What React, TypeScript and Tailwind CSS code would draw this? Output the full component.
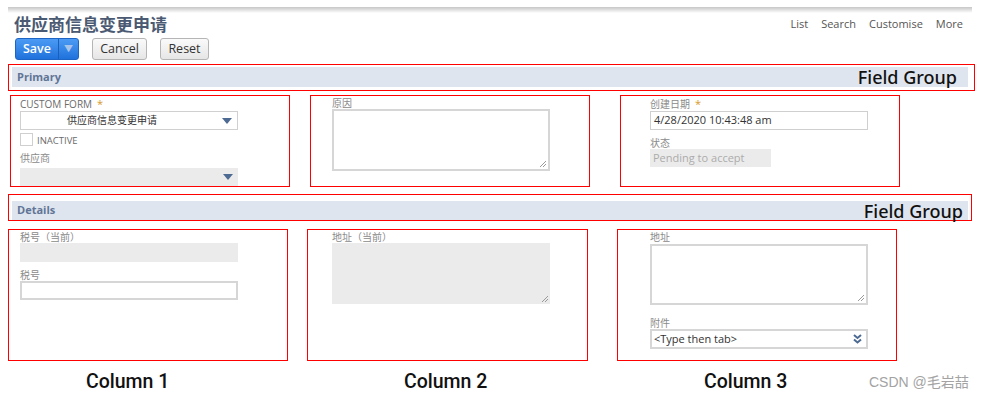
import React from "react"

const BASE = "font-['Open_Sans','Noto_Sans_CJK_SC',sans-serif]"
const LABEL = "text-[10px] leading-[12px] text-[#6b6b6b]"
const CJK_LABEL = "text-[10px] leading-[12px] text-[#8a8a8a]"

function DownTriangle() {
  return (
    <svg width="10" height="6" viewBox="0 0 10 6" className="shrink-0">
      <polygon points="0,0 10,0 5,6" fill="#4d6a92" />
    </svg>
  )
}

function DoubleChevron() {
  return (
    <svg width="9" height="10" viewBox="0 0 9 10" className="shrink-0">
      <path d="M1 1 L4.5 4 L8 1" stroke="#4d6a92" strokeWidth="2" fill="none" />
      <path d="M1 5.5 L4.5 8.5 L8 5.5" stroke="#4d6a92" strokeWidth="2" fill="none" />
    </svg>
  )
}

function ResizeGrip() {
  return (
    <svg width="8" height="8" viewBox="0 0 8 8" className="absolute right-[1px] bottom-[1px]">
      <path d="M7 1 L1 7 M7 4 L4 7" stroke="#9a9a9a" strokeWidth="1" />
    </svg>
  )
}

function Star() {
  return <span className="ml-[5px] text-[#d79a2b] text-[11px]">*</span>
}

function FieldGroup({ title, pt, barH, pr, textPr }: { title: string; pt: string; barH: string; pr: string; textPr: string }) {
  return (
    <div className={`ml-[8px] h-[27px] border border-[#f00] pl-[3px] ${pt} ${pr}`}>
      <div className={`flex items-center justify-between bg-[#dfe5ee] pl-[5px] ${barH}`}>
        <span className="text-[11px] font-bold text-[#5f7597]">{title}</span>
        <span className={`font-['Noto_Sans','Noto_Sans_CJK_SC',sans-serif] text-[18px] font-medium text-[#111] leading-none ${textPr}`}>
          Field Group
        </span>
      </div>
    </div>
  )
}

export default function App() {
  return (
    <div className={`${BASE} w-[984px] h-[400px] bg-white relative pt-[7px]`}>
      {/* top shadow */}
      <div className="ml-[8px] w-[964px] h-[6px] bg-linear-to-b from-[#c6c6c6] to-white" />

      {/* title row */}
      <div className="flex justify-between pl-[14px] pr-[21px]">
        <h1 className="text-[17px] leading-[21px] font-bold text-[#4b5a73] font-['Noto_Sans_CJK_SC',sans-serif]">
          供应商信息变更申请
        </h1>
        <nav className="flex gap-[13px] mt-[3px] text-[11px] leading-[16px] text-[#555]">
          <span>List</span>
          <span>Search</span>
          <span>Customise</span>
          <span>More</span>
        </nav>
      </div>

      {/* buttons */}
      <div className="flex items-center pl-[15px] mt-[4px] h-[22px]">
        <div className="flex h-[22px] w-[64px] rounded-[3px] overflow-hidden border border-[#1d64c4] bg-linear-to-b from-[#4b9bf4] to-[#1f72dc]">
          <span className="flex-1 flex items-center justify-center text-[12.5px] font-semibold text-white">Save</span>
          <span className="w-[20px] border-l border-[#1a5fb8] flex items-center justify-center text-[9px] text-[#a8c4ea]">▼</span>
        </div>
        <button className="ml-[13px] h-[22px] w-[55px] rounded-[3px] border border-[#b5b5b5] bg-linear-to-b from-[#fafafa] to-[#e6e6e6] text-[12.5px] text-[#333]">
          Cancel
        </button>
        <button className="ml-[13px] h-[22px] w-[49px] rounded-[3px] border border-[#b5b5b5] bg-linear-to-b from-[#fafafa] to-[#e6e6e6] text-[12.5px] text-[#333]">
          Reset
        </button>
      </div>

      {/* Primary group */}
      <div className="mt-[4px] w-[975px]">
        <FieldGroup title="Primary" pt="pt-[2px]" barH="h-[20px]" pr="pr-[6px]" textPr="pr-[11px]" />
      </div>

      {/* Primary columns */}
      <div className="flex mt-[4px]">
        <div className="ml-[10px] w-[280px] h-[92px] border border-[#f00] pl-[9px] pt-[2px] flex flex-col">
          <div className={`${LABEL} uppercase`}>
            Custom Form<Star />
          </div>
          <div className="mt-[1px] w-[218px] h-[19px] border border-[#d0d0d0] flex items-center pl-[46px] pr-[5px]">
            <span className="flex-1 text-[10px] text-[#333]">供应商信息变更申请</span>
            <DownTriangle />
          </div>
          <div className="mt-[3px] flex items-end h-[13px]">
            <div className="w-[13px] h-[13px] border border-[#cfcfcf] bg-white" />
            <span className="ml-[4px] text-[9.5px] leading-[10px] text-[#6b6b6b] uppercase">Inactive</span>
          </div>
          <div className={`${CJK_LABEL} mt-[6px]`}>供应商</div>
          <div className="mt-[4px] w-[218px] h-[18px] bg-[#ebebeb] flex items-center justify-end pr-[5px]">
            <DownTriangle />
          </div>
        </div>

        <div className="ml-[20px] w-[280px] h-[92px] border border-[#f00] pl-[21px] pt-[1px] flex flex-col">
          <div className={`${CJK_LABEL} leading-[11px]`}>原因</div>
          <div className="relative w-[218px] h-[62px] border-2 border-[#d6d6d6]">
            <ResizeGrip />
          </div>
        </div>

        <div className="ml-[30px] w-[280px] h-[92px] border border-[#f00] pl-[29px] pt-[2px] flex flex-col">
          <div className={CJK_LABEL}>
            创建日期<Star />
          </div>
          <div className="mt-[1px] w-[218px] h-[19px] border border-[#cfcfcf] flex items-center pl-[3px] text-[11px] text-[#333]">
            4/28/2020 10:43:48 am
          </div>
          <div className={`${CJK_LABEL} mt-[7px]`}>状态</div>
          <div className="w-[121px] h-[18px] bg-[#ebebeb] flex items-center pl-[3px] text-[11px] text-[#ababab]">
            Pending to accept
          </div>
        </div>
      </div>

      {/* Details group */}
      <div className="mt-[7px] w-[972px]">
        <FieldGroup title="Details" pt="pt-[6px]" barH="h-[19px]" pr="pr-[3px]" textPr="pr-[5px]" />
      </div>

      {/* Details columns */}
      <div className="flex mt-[8px]">
        <div className="ml-[8px] w-[280px] h-[132px] border border-[#f00] pl-[11px] pt-[1px] flex flex-col">
          <div className={CJK_LABEL}>税号（当前）</div>
          <div className="w-[218px] h-[19px] bg-[#ebebeb]" />
          <div className={`${CJK_LABEL} mt-[7px]`}>税号</div>
          <div className="w-[218px] h-[19px] border-2 border-[#d6d6d6]" />
        </div>

        <div className="ml-[19px] w-[281px] h-[132px] border border-[#f00] pl-[24px] pt-[1px] flex flex-col">
          <div className={`${CJK_LABEL} leading-[11px]`}>地址（当前）</div>
          <div className="relative w-[218px] h-[61px] bg-[#ebebeb]">
            <ResizeGrip />
          </div>
        </div>

        <div className="ml-[29px] w-[280px] h-[132px] border border-[#f00] pl-[32px] pt-[1px] flex flex-col">
          <div className={`${CJK_LABEL} leading-[11px]`}>地址</div>
          <div className="relative mt-[1px] w-[218px] h-[61px] border-2 border-[#d6d6d6]">
            <ResizeGrip />
          </div>
          <div className={`${CJK_LABEL} leading-[11px] mt-[12px]`}>附件</div>
          <div className="w-[218px] h-[20px] border-2 border-[#d6d6d6] flex items-center pl-[2px] pr-[4px]">
            <span className="flex-1 text-[11px] text-[#333]">&lt;Type then tab&gt;</span>
            <DoubleChevron />
          </div>
        </div>
      </div>

      {/* column captions */}
      <div className="flex items-center mt-[10px] h-[22px] font-['Roboto',sans-serif] text-[19.5px] font-medium text-[#111]">
        <span className="ml-[86px] w-[82px] whitespace-nowrap">Column 1</span>
        <span className="ml-[236px] w-[82px] whitespace-nowrap">Column 2</span>
        <span className="ml-[218px] w-[82px] whitespace-nowrap">Column 3</span>
        <span className="ml-[83px] text-[14px] font-normal text-[#a3a3a3] font-['Liberation_Sans','Noto_Sans_CJK_SC',sans-serif] whitespace-nowrap">
          CSDN @毛岩喆
        </span>
      </div>
    </div>
  )
}
